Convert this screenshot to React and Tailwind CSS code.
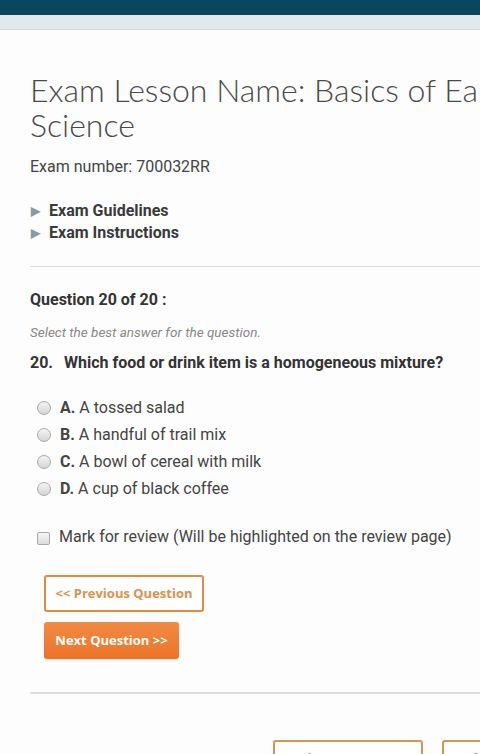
import React from "react";

const options = [
  { letter: "A.", text: "A tossed salad" },
  { letter: "B.", text: "A handful of trail mix" },
  { letter: "C.", text: "A bowl of cereal with milk" },
  { letter: "D.", text: "A cup of black coffee" },
];

function Radio() {
  return (
    <span className="inline-block w-[14px] h-[14px] rounded-full border border-[#a9a9a9] bg-gradient-to-b from-[#f4f4f4] to-[#d6d6d6] shrink-0" />
  );
}

export default function App() {
  return (
    <div className="w-[480px] h-[754px] overflow-hidden bg-[#fdfdfd] font-['Roboto',sans-serif] text-[#444]">
      <div className="w-[620px]">
        {/* top bars */}
        <div className="h-[15px] bg-[#0a4660]" />
        <div className="h-[15px] bg-[#e1e9ec] border-b border-[#d3dcdc]" />

        <div className="pl-[30px] pr-[60px] pt-[42px]">
          <h1 className="font-['Lato',sans-serif] font-light text-[32px] leading-[35px] text-[#4a4a4a] w-[540px]">
            Exam Lesson Name: Basics of Earth Science
          </h1>

          <p className="mt-[13px] text-[16px] text-[#444]">Exam number: 700032RR</p>

          <div className="mt-[22px] flex flex-col gap-[2px]">
            {["Exam Guidelines", "Exam Instructions"].map((t) => (
              <div key={t} className="flex items-center gap-[9px] text-[16px] leading-[20px] font-bold text-[#3a3a3a]">
                <span className="text-[#8a9ca3] text-[12px] leading-none pl-[1px]">▶</span>
                <span>{t}</span>
              </div>
            ))}
          </div>

          <div className="mt-[23px] border-t border-[#d9d9d9]" />

          <p className="mt-[21px] text-[16px] font-bold text-[#333]">Question 20 of 20 :</p>
          <p className="mt-[10px] text-[13.5px] italic text-[#888]">Select the best answer for the question.</p>
          <p className="mt-[9px] text-[16px] font-bold text-[#333]">
            20.<span className="ml-[11px]">Which food or drink item is a homogeneous mixture?</span>
          </p>

          <div className="mt-[22px] pl-[7px] flex flex-col gap-[5px]">
            {options.map((o) => (
              <div key={o.letter} className="flex items-center gap-[9px] text-[16px] leading-[22px]">
                <Radio />
                <span>
                  <span className="font-bold text-[#444]">{o.letter}</span> {o.text}
                </span>
              </div>
            ))}
          </div>

          <div className="mt-[25px] pl-[7px] flex items-center gap-[9px] text-[16px]">
            <span className="inline-block w-[13px] h-[13px] mt-[3px] rounded-[2px] border border-[#a9a9a9] bg-gradient-to-b from-[#f6f6f6] to-[#dcdcdc] shrink-0" />
            <span>Mark for review (Will be highlighted on the review page)</span>
          </div>

          <div className="mt-[26px] pl-[14px] flex flex-col items-start gap-[10px] font-['Open_Sans',sans-serif] text-[13px] font-bold">
            <button className="h-[37px] w-[160px] border-2 border-[#e38a45] rounded-[3px] text-[#e0904f] bg-white">
              &lt;&lt; Previous Question
            </button>
            <button className="h-[37px] w-[135px] rounded-[3px] text-white bg-gradient-to-b from-[#f28a44] to-[#ec7427] shadow-sm">
              Next Question &gt;&gt;
            </button>
          </div>

          <div className="mt-[33px] border-t-2 border-[#dedede]" />

          <div className="mt-[46px] pl-[243px] flex gap-[19px] font-['Open_Sans',sans-serif] text-[13px] font-bold">
            <button className="h-[37px] w-[153px] border-2 border-[#d69550] rounded-[3px] text-[#c7803f] bg-white">
              Review My Answers
            </button>
            <button className="h-[37px] w-[120px] border-2 border-[#d69550] rounded-[3px] text-[#c7803f] bg-white">
              Submit Exam
            </button>
          </div>
        </div>
      </div>
    </div>
  );
}
